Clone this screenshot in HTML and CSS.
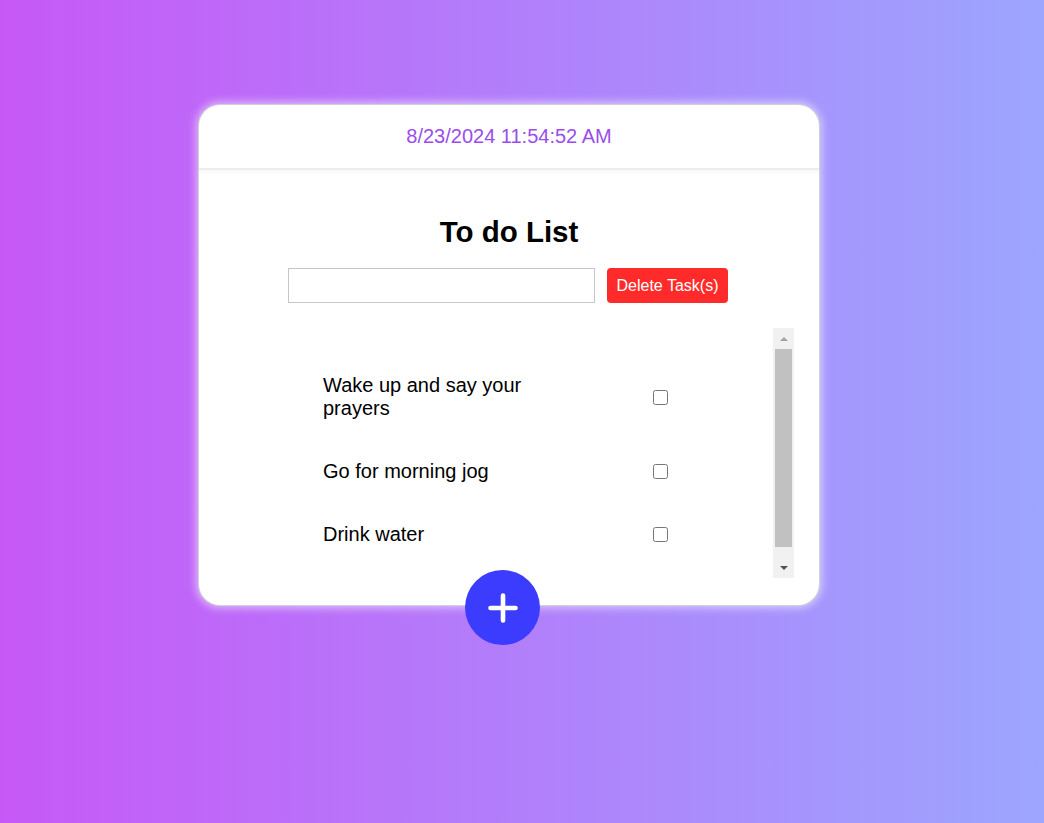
FILE: index.html
```html
<!DOCTYPE html>
<html lang="en">
<head>
<meta charset="utf-8">
<title>To do List</title>
<link rel="stylesheet" href="styles.css">
</head>
<body>
  <div class="card">
    <div class="card-header">8/23/2024 11:54:52 AM</div>
    <div class="card-body">
      <h2 class="title">To do List</h2>
      <div class="entry">
        <input class="task-input" type="text">
        <button class="delete-btn" type="button">Delete Task(s)</button>
      </div>
      <div class="list">
        <div class="list-content">
          <div class="row">
            <span class="task">Wake up and say your prayers</span>
            <input class="check" type="checkbox">
          </div>
          <div class="row">
            <span class="task">Go for morning jog</span>
            <input class="check" type="checkbox">
          </div>
          <div class="row">
            <span class="task">Drink water</span>
            <input class="check" type="checkbox">
          </div>
        </div>
        <div class="scrollbar" aria-hidden="true">
          <div class="sb-btn"><span class="arrow-up"></span></div>
          <div class="sb-track"><div class="sb-thumb"></div></div>
          <div class="sb-btn"><span class="arrow-down"></span></div>
        </div>
      </div>
    </div>
    <button class="add-btn" type="button" aria-label="Add task">
      <svg width="32" height="32" viewBox="0 0 32 32"><path d="M16 3.5V28.5M3.5 16H28.5" stroke="#fff" stroke-width="4.6" stroke-linecap="round" fill="none"/></svg>
    </button>
  </div>
</body>
</html>
```

FILE: styles.css
```css
html, body {
  margin: 0;
  padding: 0;
}
body {
  height: 823px;
  overflow: hidden;
  background: linear-gradient(to right, #c758f7, #9ca6fe);
  font-family: "Liberation Sans", Arial, sans-serif;
  padding: 104px 0 0 198px;
  box-sizing: border-box;
}
.card {
  position: relative;
  width: 622px;
  height: 502px;
  box-sizing: border-box;
  background: #fff;
  border-radius: 22px;
  border: 1px solid rgba(140, 140, 160, 0.4);
  box-shadow: 0 0 9px 2px rgba(255, 255, 255, 0.55);
  display: flex;
  flex-direction: column;
}
.card-header {
  height: 63px;
  display: flex;
  align-items: center;
  justify-content: center;
  font-size: 20px;
  color: #9a4dec;
  border-bottom: 2px solid #ececec;
  box-shadow: 0 2px 4px rgba(0, 0, 0, 0.04);
}
.card-body {
  display: flex;
  flex-direction: column;
  align-items: center;
  padding-top: 45px;
}
.title {
  margin: 0 0 20px 0;
  font-size: 29.5px;
  line-height: 33px;
  font-weight: bold;
  color: #000;
}
.entry {
  display: flex;
  gap: 12px;
  height: 35px;
  margin: 0 2px 25px 0;
}
.task-input {
  width: 307px;
  height: 35px;
  box-sizing: border-box;
  border: 1px solid #c6c6c6;
  margin: 0;
  padding: 0 6px;
  font-size: 16px;
}
.delete-btn {
  height: 35px;
  width: 121px;
  border: none;
  border-radius: 4px;
  background: #ff2a2a;
  color: #fff;
  font-family: "Liberation Sans", Arial, sans-serif;
  font-size: 16px;
  padding: 0;
}
.list {
  align-self: stretch;
  margin: 0 25px;
  height: 250px;
  display: flex;
}
.list-content {
  flex: 1;
  overflow: hidden;
  padding: 26px 0 24px;
}
.scrollbar {
  width: 21px;
  background: #f1f1f1;
  display: flex;
  flex-direction: column;
}
.sb-btn {
  height: 21px;
  display: flex;
  align-items: center;
  justify-content: center;
}
.arrow-up {
  width: 0;
  height: 0;
  border-left: 4px solid transparent;
  border-right: 4px solid transparent;
  border-bottom: 4px solid #a3a3a3;
}
.arrow-down {
  width: 0;
  height: 0;
  border-left: 4px solid transparent;
  border-right: 4px solid transparent;
  border-top: 4px solid #505050;
}
.sb-track {
  flex: 1;
  padding: 0 2px;
}
.sb-thumb {
  height: 198px;
  background: #c1c1c1;
}
.row {
  display: flex;
  align-items: center;
  justify-content: space-between;
  padding: 20px 105px 20px 99px;
}
.task {
  width: 240px;
  font-size: 20px;
  line-height: 23px;
  color: #000;
}
.check {
  width: 15px;
  height: 15px;
  margin: 0;
}
.add-btn {
  position: absolute;
  left: 266px;
  bottom: -40px;
  width: 75px;
  height: 75px;
  border-radius: 50%;
  border: none;
  padding: 0;
  background: #3c3cfe;
  display: flex;
  align-items: center;
  justify-content: center;
}
.add-btn svg {
  display: block;
}
```
